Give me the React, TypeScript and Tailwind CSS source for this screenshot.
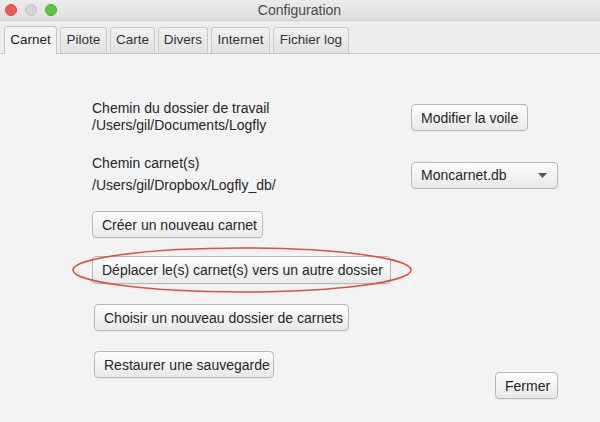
const tabs = [
  { label: "Carnet", w: "w-[53px]" },
  { label: "Pilote", w: "w-[47px]" },
  { label: "Carte", w: "w-[45px]" },
  { label: "Divers", w: "w-[50px]" },
  { label: "Internet", w: "w-[59px]" },
  { label: "Fichier log", w: "w-[76px]" },
];

const Btn = ({ children, className = "" }: { children: React.ReactNode; className?: string }) => (
  <button
    className={
      "h-[27px] px-[9px] rounded-[4px] border border-[#b8b8b8] bg-gradient-to-b from-[#fdfdfd] to-[#e9e9e9] text-[14px] text-[#262626] leading-none shadow-[0_1px_0_rgba(0,0,0,0.04)] whitespace-nowrap " +
      className
    }
  >
    {children}
  </button>
);

export default function App() {
  return (
    <div className="w-[600px] h-[422px] flex flex-col bg-[#f3f3f3] font-['Liberation_Sans',Arial,sans-serif] text-[#262626] overflow-hidden">
      {/* title bar */}
      <div className="h-[21px] flex items-center relative bg-gradient-to-b from-[#ececec] to-[#dedede] border-b border-[#cfcfcf]">
        <div className="flex gap-[8px] pl-[5px]">
          <span className="w-[12px] h-[12px] rounded-full bg-[#ee5b54] border border-[#d84b44]" />
          <span className="w-[12px] h-[12px] rounded-full bg-[#d3d3d3] border border-[#c5c5c5]" />
          <span className="w-[12px] h-[12px] rounded-full bg-[#5cc640] border border-[#4aae33]" />
        </div>
        <div className="flex-1 text-center text-[14px] text-[#4a4a4a] pr-[2px]">Configuration</div>
        <div className="w-[56px]" />
      </div>

      {/* tab strip */}
      <div className="h-[33px] bg-[#ececec] border-b border-[#c9c9c9] flex items-end pl-[4px] gap-[3px]">
        {tabs.map((t, i) =>
          i === 0 ? (
            <div
              key={t.label}
              className={`${t.w} h-[28px] -mb-px rounded-t-[3px] border border-b-0 border-[#c4c4c4] bg-[#f3f3f3] flex items-center justify-center text-[13.5px] text-[#222]`}
            >
              {t.label}
            </div>
          ) : (
            <div
              key={t.label}
              className={`${t.w} h-[26px] rounded-t-[3px] border border-b-0 border-[#c9c9c9] bg-gradient-to-b from-[#f1f1f1] to-[#e2e2e2] flex items-center justify-center text-[13.5px] text-[#333]`}
            >
              {t.label}
            </div>
          )
        )}
      </div>

      {/* content */}
      <div className="flex-1 relative flex flex-col text-[14px]">
        <div className="flex mt-[46px] pl-[92px]">
          <div className="w-[319px] leading-[17px]">
            <div>Chemin du dossier de travail</div>
            <div>/Users/gil/Documents/Logfly</div>
          </div>
          <Btn className="mt-[4px] h-[26px]">Modifier la voile</Btn>
        </div>

        <div className="flex mt-[21px] pl-[92px]">
          <div className="w-[319px] leading-[17px]">
            <div>Chemin carnet(s)</div>
            <div className="mt-[5px]">/Users/gil/Dropbox/Logfly_db/</div>
          </div>
          <button className="mt-[7px] w-[147px] h-[27px] pl-[9px] pr-[10px] rounded-[4px] border border-[#b8b8b8] bg-gradient-to-b from-[#fdfdfd] to-[#e9e9e9] flex items-center justify-between text-[14px] text-[#262626]">
            <span>Moncarnet.db</span>
            <svg width="9" height="5" viewBox="0 0 9 5">
              <path d="M0 0h9L4.5 5z" fill="#555" />
            </svg>
          </button>
        </div>

        <div className="pl-[92px] mt-[17px]">
          <Btn className="w-[171px]">Créer un nouveau carnet</Btn>
        </div>

        <div className="pl-[92px] mt-[18px]">
          <Btn className="w-[299px] h-[28px] border-[#6fb0e0] shadow-[0_0_0_1px_#a9d0f0]">
            Déplacer le(s) carnet(s) vers un autre dossier
          </Btn>
        </div>

        <div className="pl-[94px] mt-[20px]">
          <Btn className="w-[255px] h-[26px]">Choisir un nouveau dossier de carnets</Btn>
        </div>

        <div className="flex pl-[94px] mt-[20px]">
          <Btn className="w-[180px] h-[26px]">Restaurer une sauvegarde</Btn>
          <Btn className="ml-[221px] mt-[21px] w-[63px]">Fermer</Btn>
        </div>

        {/* red annotation ellipse */}
        <svg className="absolute left-0 top-0 pointer-events-none" width="600" height="368">
          <ellipse cx="242" cy="216" rx="169" ry="22" fill="none" stroke="#d9533f" strokeWidth="1.6" />
        </svg>
      </div>
    </div>
  );
}
